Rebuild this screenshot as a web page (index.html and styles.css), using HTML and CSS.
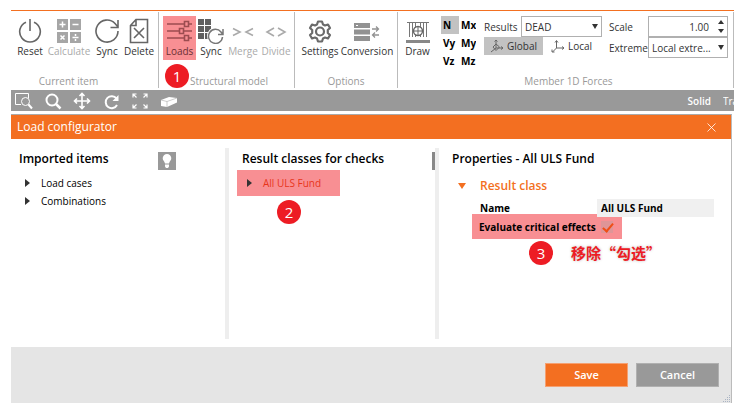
FILE: index.html
```html
<!DOCTYPE html>
<html lang="en">
<head>
<meta charset="utf-8">
<title>Load configurator</title>
<link rel="stylesheet" href="styles.css">
</head>
<body>
<main class="app">
  <header class="ribbon">
    <section class="group">
      <div class="tools tools-item">
        <button class="tool"><svg width="24" height="28" viewBox="0 0 24 28" fill="none" stroke="#666" stroke-width="1.6"><path d="M8 6.2A10.3 10.3 0 1 0 16 6.2M12 3v12"/></svg><span>Reset</span></button>
        <button class="tool off"><svg width="26" height="28" viewBox="0 0 26 28"><path fill="#a6a6a6" d="M1 3h11v11H1zM14 3h11v11H14zM1 16h11v11H1zM14 16h11v11H14z"/><path stroke="#fff" stroke-width="1.5" fill="none" d="M3.500 8.500h6M6.500 5.500v6M16.500 8.500h6M4.500 19.500l4 4M8.500 19.500l-4 4M16.500 21.500h6M19.500 18v2M19.500 23v2"/></svg><span>Calculate</span></button>
        <button class="tool"><svg width="26" height="28" viewBox="0 0 26 28" fill="none" stroke="#666" stroke-width="1.6"><path d="M24 15A11 11 0 1 1 21 7.500L24 11M24 4v7.500h-7.500"/></svg><span>Sync</span></button>
        <button class="tool"><svg width="22" height="28" viewBox="0 0 22 28" fill="none" stroke="#666" stroke-width="1.6"><path d="M8 3.500h11.500v23h-17V9.500zM8 3.500v6H2.500M6 12l10 10M16 12L6 22"/></svg><span>Delete</span></button>
      </div>
      <h2>Current item</h2>
    </section>
    <section class="group">
      <div class="tools tools-model">
        <button class="tool marked"><svg width="26" height="28" viewBox="0 0 26 28" fill="none" stroke="#9c4c50" stroke-width="1.600"><path d="M0 8h17M22 8h3M0 15h12M17 15h8M0 22h17M22 22h3M17.500 5.500h4v5h-4zM12.500 12.500h4v5h-4zM17.500 19.500h4v5h-4z"/></svg><span>Loads</span></button>
        <button class="tool"><svg width="28" height="28" viewBox="0 0 28 28"><path fill="#606060" d="M1 3h6v6H1zM8 3h6v6H8zM1 10h6v6H1zM8 10h6v6H8zM1 17h6v6H1zM8 17h4v6H8z"/><circle cx="19" cy="20" r="9" fill="#fff"/><path fill="none" stroke="#777" stroke-width="1.500" d="M25.500 21a7 7 0 1 1-1.500-5l2 2.500M26 13v5.500h-5"/></svg><span>Sync</span></button>
        <button class="tool off"><svg width="24" height="28" viewBox="0 0 24 28" fill="none" stroke="#aaa" stroke-width="1.600"><path d="M2 12.500l7 3.500-7 3.500M22 12.500L15 16l7 3.500"/></svg><span>Merge</span></button>
        <button class="tool off"><svg width="24" height="28" viewBox="0 0 24 28" fill="none" stroke="#aaa" stroke-width="1.600"><path d="M10 12l-7 4 7 4M14 12l7 4-7 4"/></svg><span>Divide</span></button>
      </div>
      <h2 class="model-title">Structural model</h2>
      <span class="badge badge-loads">1</span>
    </section>
    <section class="group">
      <div class="tools tools-options">
        <button class="tool"><svg width="24" height="28" viewBox="0 0 24 28" fill="none" stroke="#6a6a6a" stroke-width="2.200" stroke-linejoin="round"><circle cx="12" cy="15.500" r="4"/><path d="M10 5.500h4l1 3 2 1 3-1 2 3.500-2.200 2v3l2.200 2-2 3.500-3-1-2 1-1 3h-4l-1-3-2-1-3 1L2 19l2.200-2v-3L2 12l2-3.500 3 1 2-1z"/></svg><span>Settings</span></button>
        <button class="tool"><svg width="26" height="28" viewBox="0 0 26 28"><path fill="#929292" d="M0 7h16v5H0zM0 13.500h16v5H0zM0 20h16v5H0z"/><path fill="#fff" d="M2 9h2v1H2z"/><path fill="none" stroke="#929292" stroke-width="1.300" d="M18 13h6.500M22 10.500l2.500 2.500-2.500 2.500M25 19h-6.500M21 16.500L18.500 19l2.500 2.500"/></svg><span>Conversion</span></button>
      </div>
      <h2>Options</h2>
    </section>
    <section class="group forces">
      <div class="force-tools">
        <button class="tool"><svg width="24" height="28" viewBox="0 0 24 28" fill="none"><path stroke="#777" d="M1 6.500h22M3.500 7v14M6.500 7v14M9.500 7v14M14.500 7v14M17.500 7v14M20.500 7v14"/><circle cx="12" cy="15" r="4.500" fill="#fff" stroke="#666" stroke-width="1.400"/><path stroke="#666" d="M12 11v8M8 15h8"/><path fill="#888" d="M0 24h24v3H0z"/></svg><span>Draw</span></button>
        <div class="components">
          <button class="on">N</button><button>Mx</button>
          <button>Vy</button><button>My</button>
          <button>Vz</button><button>Mz</button>
        </div>
        <div class="results">
          <div class="row">
            <label for="results">Results</label>
            <span class="select"><select id="results"><option>DEAD</option></select></span>
          </div>
          <div class="axes">
            <button class="on"><svg width="14" height="14" viewBox="0 0 14 14" fill="none" stroke="#666"><path d="M6 1v8h7M6 9l-5 4M4.500 2.500L6 1l1.500 1.500M11 7.500L13 9l-2 1.500M3 8l3-3 3.500 3L6 11.500z"/></svg>Global</button>
            <button><svg width="14" height="14" viewBox="0 0 14 14" fill="none" stroke="#666"><path d="M5.500 2v7H13M5.500 9L1.500 13M4 3.500L5.500 1.500 7 3.500M11 7.500l2 1.500-2 1.500M1 10.500V13h2.500"/></svg>Local</button>
          </div>
        </div>
        <div class="display">
          <label for="scale">Scale</label>
          <span class="number"><input id="scale" type="text" value="1.00"><button class="up" aria-label="Increase"></button><button class="down" aria-label="Decrease"></button></span>
          <label for="extreme">Extreme</label>
          <span class="select"><select id="extreme"><option>Local extre...</option></select></span>
        </div>
      </div>
      <h2>Member 1D Forces</h2>
    </section>
  </header>

  <nav class="viewbar">
    <button aria-label="Zoom window"><svg width="18" height="18" viewBox="0 0 18 18" fill="none" stroke="#fff"><path d="M6 12.500H.5v-11h13V6"/><circle cx="10.500" cy="9.500" r="4"/><path stroke-width="2" d="M13.500 12.500l3.500 4"/></svg></button>
    <button aria-label="Zoom"><svg width="18" height="18" viewBox="0 0 18 18" fill="none" stroke="#fff" stroke-width="2"><circle cx="8" cy="8" r="5.500"/><path stroke-width="2.500" d="M12 12l4.500 4.500"/></svg></button>
    <button aria-label="Pan"><svg width="18" height="18" viewBox="0 0 18 18" fill="none" stroke="#fff" stroke-width="1.600"><path d="M9 1.500v15M1.500 9h15M6.500 4L9 1.500 11.500 4M6.500 14L9 16.500l2.500-2.500M4 6.500L1.500 9 4 11.500M14 6.500L16.500 9 14 11.500"/></svg></button>
    <button aria-label="Rotate"><svg width="18" height="18" viewBox="0 0 18 18"><path fill="none" stroke="#fff" stroke-width="2" d="M15 13a6 6 0 1 1-.5-6.500"/><path fill="#fff" d="M16.500 3v6h-6z"/></svg></button>
    <button aria-label="Fit view"><svg width="18" height="18" viewBox="0 0 18 18" fill="none" stroke="#fff" stroke-width="1.200"><path d="M2 5.500V2h3.500M2 2l3.500 3.500M12.500 2H16v3.500M16 2l-3.500 3.500M2 12.500V16h3.500M2 16l3.500-3.500M12.500 16H16v-3.500M16 16l-3.500-3.500"/></svg></button>
    <button aria-label="Solid view"><svg width="18" height="18" viewBox="0 0 18 18"><path fill="#fff" d="M1 8l8-3 8 1v4.500L7 15l-6-1z"/><path fill="none" stroke="#aaa" stroke-width=".6" d="M1 8l6 1.500L17 6M7 9.500V15"/></svg></button>
    <span class="modes"><button class="solid">Solid</button><button class="clipped">Tra</button></span>
  </nav>

  <section class="dialog">
    <header class="titlebar">
      <h1>Load configurator</h1>
      <button aria-label="Close"><svg width="9" height="9" viewBox="0 0 9 9" stroke="#fff" stroke-width=".8"><path d="M.5.5l8 8M8.500.5l-8 8"/></svg></button>
    </header>
    <div class="panes">
      <section class="pane">
        <div class="head"><h3>Imported items</h3>
          <button class="hint" aria-label="Hint"><svg width="18" height="18" viewBox="0 0 18 18"><path fill="#fff" d="M9 2a4.300 4.300 0 0 0-4.300 4.300c0 2.200 1.800 3 2.300 5.200h4c.5-2.200 2.300-3 2.300-5.200A4.300 4.300 0 0 0 9 2zM7 12.500h4v2l-1 1.500H8l-1-1.500z"/></svg></button>
        </div>
        <ul class="tree"><li>Load cases</li><li>Combinations</li></ul>
      </section>
      <section class="pane">
        <div class="head"><h3>Result classes for checks</h3><span class="thumb"></span></div>
        <ul class="tree chosen"><li>All ULS Fund</li></ul>
        <span class="badge badge-class">2</span>
      </section>
      <section class="pane">
        <div class="head"><h3>Properties - All ULS Fund</h3></div>
        <h4>Result class</h4>
        <div class="field"><label for="name">Name</label><input id="name" type="text" value="All ULS Fund"></div>
        <div class="field critical"><label for="critical">Evaluate critical effects</label><input id="critical" type="checkbox" checked></div>
        <p class="note"><span class="badge">3</span><span class="note-text" lang="zh-CN">移除“勾选”</span></p>
      </section>
    </div>
    <footer class="actions">
      <button class="save">Save</button><button>Cancel</button>
      <svg class="grip" width="9" height="9" viewBox="0 0 9 9" fill="#aab4c4"><path d="M7 1h1v1H7zM5 3h1v1H5zM7 3h1v1H7zM3 5h1v1H3zM5 5h1v1H5zM7 5h1v1H7zM1 7h1v1H1zM3 7h1v1H3zM5 7h1v1H5zM7 7h1v1H7z"/></svg>
    </footer>
  </section>
</main>
</body>
</html>
```
FILE: styles.css
```css
* { box-sizing: border-box; }
body {
  margin: 0;
  background: #fff;
  color: #333;
  font: 10px/14px "Open Sans", "Noto Sans", "Noto Sans CJK SC", sans-serif;
}
button, input, select { font: inherit; color: inherit; }
button { border: 0; padding: 0; background: none; }
h1, h2, h3, h4, p, ul { margin: 0; padding: 0; font-weight: 400; }
svg { display: block; flex: none; }

.app {
  display: flex;
  flex-direction: column;
  min-height: 100vh;
  padding: 10px 7px 9px 11px;
}

/* Ribbon */
.ribbon {
  display: grid;
  grid-template-columns: 148px 136px 103px 1fr;
  height: 80px;
  border-top: 1px solid #f37021;
  padding: 1px 0 2px;
}
.group {
  position: relative;
  display: flex;
  flex-direction: column;
  justify-content: space-between;
  min-width: 0;
  padding: 4px 0 0;
  border-right: 1px solid #bbb;
}
.group h2 {
  font-size: 10px;
  line-height: 14px;
  color: #999;
  text-align: center;
}
.group:first-child h2 { padding-right: 32px; }
.group .model-title { padding-right: 26px; text-align: right; }
.tools { display: grid; height: 44px; }
.tools-item { grid-template-columns: 38px 40px 36px 28px; }
.tools-model { grid-template-columns: 33px 30px 34px 32px; padding-left: 4px; }
.tools-options { grid-template-columns: 50px 44px; }
.tool {
  display: flex;
  flex-direction: column;
  align-items: center;
  height: 44px;
  min-width: 0;
  white-space: nowrap;
}
.tool.off { color: #aaa; }
.tool.marked { background: #f88f93; color: #6b3033; }
.forces .force-tools + h2 { padding-left: 6px; }
.force-tools {
  display: grid;
  grid-template-columns: 39px 35px 122px 1fr;
  gap: 4px;
  height: 56px;
}
.components {
  display: grid;
  grid-template-columns: 18px 17px;
  grid-template-rows: repeat(3, 18px);
  color: #000;
  font-weight: 700;
}
.components button { padding-left: 2px; overflow: hidden; text-align: left; }
.on { background: #c2c2c2; }
.results { padding-left: 4px; }
.row { display: flex; align-items: center; height: 21px; }
.row label { flex: 0 0 37px; }
.row .select { flex: 1; }
.select { position: relative; display: block; height: 21px; }
.select select {
  width: 100%;
  height: 100%;
  padding: 0 3px;
  border: 1px solid #b0b0b0;
  border-radius: 0;
  background: #fff;
  appearance: none;
}
.select::after {
  content: "";
  position: absolute;
  top: 8px;
  right: 4px;
  border: 3px solid transparent;
  border-top: 5px solid #333;
  border-bottom: 0;
}
.axes { display: flex; gap: 8px; }
.axes button { display: flex; align-items: center; gap: 3px; height: 18px; }
.axes .on { padding: 0 6px; }
.display {
  display: grid;
  grid-template-columns: 39px 1fr;
  grid-template-rows: 21px 21px;
  align-items: center;
  padding: 0 5px 0 3px;
}
.number { position: relative; display: block; height: 21px; }
.number input {
  width: 100%;
  height: 100%;
  padding: 0 18px 0 3px;
  border: 1px solid #b0b0b0;
  text-align: right;
}
.number button {
  position: absolute;
  right: 4px;
  border: 3px solid transparent;
}
.number .up { top: 4px; border-bottom: 4px solid #333; border-top: 0; }
.number .down { bottom: 4px; border-top: 4px solid #333; border-bottom: 0; }

/* View toolbar */
.viewbar {
  display: flex;
  align-items: center;
  gap: 11px;
  height: 21px;
  padding-left: 4px;
  background: #999;
  color: #fff;
}
.modes { display: flex; gap: 12px; margin-left: auto; }
.solid { font-weight: 600; }
.clipped { width: 11px; overflow: hidden; text-align: left; }

/* Dialog */
.dialog {
  flex: 1;
  display: flex;
  flex-direction: column;
  margin: 3px 2px 0 0;
  border-top: 1px solid #aaa;
  border-right: 1px solid #bbb;
}
.titlebar {
  display: flex;
  align-items: center;
  justify-content: space-between;
  height: 24px;
  padding: 0 15px 0 6px;
  background: #f36f21;
  color: #fff;
}
.titlebar h1 { font-size: 12px; line-height: 16px; }
.panes {
  flex: 1;
  display: grid;
  grid-template-columns: 214px 210px 1fr;
  padding: 9px 0 8px;
  color: #000;
}
.pane { position: relative; padding: 2px 0 0 8px; }
.pane + .pane { border-left: 4px solid #eee; padding-left: 13px; }
.head { display: flex; justify-content: space-between; height: 20px; }
.head h3 { font-size: 12px; line-height: 18px; font-weight: 600; white-space: nowrap; }
.pane:first-child .head { padding-right: 49px; margin-bottom: 4px; }
.hint { width: 18px; height: 18px; margin-top: 2px; background: #999; }
.thumb { width: 3px; height: 18px; margin-top: 2px; background: #888; }
.tree { list-style: none; }
.tree li {
  display: flex;
  align-items: center;
  gap: 11px;
  height: 18px;
  padding-left: 6px;
}
.tree li::before {
  content: "";
  border: 4px solid transparent;
  border-left: 5px solid #333;
  border-right: 0;
}
.chosen {
  width: 103px;
  margin-left: -5px;
  background: #f88f93;
  color: #e8351b;
}
.chosen li { height: 26px; padding-left: 10px; }
h4 {
  display: flex;
  align-items: center;
  gap: 14px;
  height: 26px;
  margin-top: 3px;
  padding-left: 6px;
  color: #f36f21;
  font-size: 12px;
  font-weight: 600;
}
h4::before {
  content: "";
  border: 4px solid transparent;
  border-top: 6px solid #f36f21;
  border-bottom: 0;
}
.field {
  display: grid;
  grid-template-columns: 117px 1fr;
  align-items: center;
  height: 18px;
  padding: 0 17px 0 28px;
  font-weight: 700;
}
.field label { white-space: nowrap; }
.field input[type="text"] {
  width: 100%;
  height: 18px;
  padding: 0 4px;
  border: 0;
  background: #f0f0f0;
}
.critical {
  width: 150px;
  height: 25px;
  margin: -3px 0 0 20px;
  padding: 0 0 0 7px;
  grid-template-columns: 122px 1fr;
  background: #f88f93;
}
.critical input {
  position: relative;
  width: 12px;
  height: 12px;
  margin: 0;
  background: #df9597;
  appearance: none;
}
.critical input:checked::after {
  content: "";
  position: absolute;
  top: 0;
  left: 4px;
  width: 4px;
  height: 9px;
  border: solid #f04e16;
  border-width: 0 2px 2px 0;
  transform: rotate(40deg);
}
.note { display: flex; align-items: center; gap: 18px; margin-top: 2px; padding-left: 77px; }
.note-text {
  color: #ed1c24;
  font-size: 15px;
  line-height: 20px;
  font-family: "Noto Sans CJK SC", sans-serif;
  font-weight: 700;
  text-shadow: 0 0 3px #bbb;
  white-space: nowrap;
}
.badge {
  display: block;
  flex: none;
  width: 24px;
  height: 24px;
  border-radius: 50%;
  background: #ed1c24;
  color: #fff;
  font: 15px/24px "Open Sans", sans-serif;
  text-align: center;
}
.badge-loads { position: absolute; left: 6px; bottom: 0; }
.badge-class { position: absolute; left: 48px; top: 52px; }

.actions {
  position: relative;
  display: flex;
  justify-content: flex-end;
  gap: 8px;
  height: 56px;
  padding: 16px 12px 0 0;
  background: #e5e5e5;
}
.actions button {
  width: 83px;
  height: 24px;
  border: 1px solid #b0b0b0;
  background: #999;
  color: #fff;
  font-size: 11px;
  font-weight: 600;
}
.actions .save { background: #f36f21; border-color: #f5a071; }
.grip { position: absolute; right: 0; bottom: 0; }
```
